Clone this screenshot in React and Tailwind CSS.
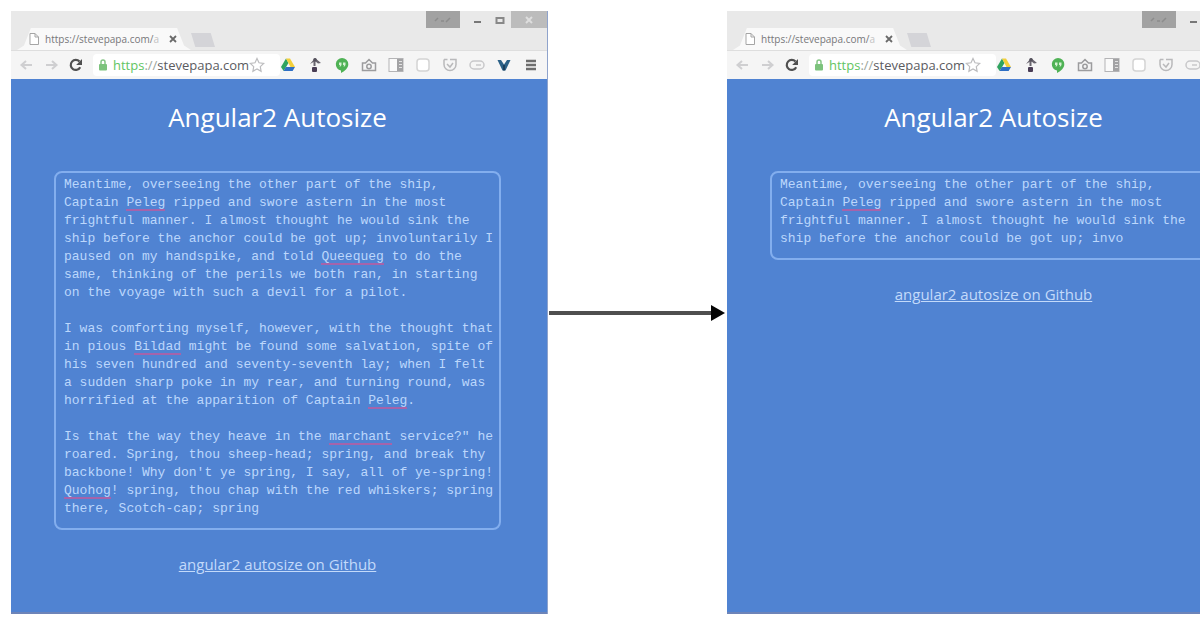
import React from "react";

const FULL_TEXT = `Meantime, overseeing the other part of the ship, Captain Peleg ripped and swore astern in the most frightful manner. I almost thought he would sink the ship before the anchor could be got up; involuntarily I paused on my handspike, and told Queequeg to do the same, thinking of the perils we both ran, in starting on the voyage with such a devil for a pilot.

I was comforting myself, however, with the thought that in pious Bildad might be found some salvation, spite of his seven hundred and seventy-seventh lay; when I felt a sudden sharp poke in my rear, and turning round, was horrified at the apparition of Captain Peleg.

Is that the way they heave in the marchant service?" he roared. Spring, thou sheep-head; spring, and break thy backbone! Why don't ye spring, I say, all of ye-spring! Quohog! spring, thou chap with the red whiskers; spring there, Scotch-cap; spring`;

const SHORT_TEXT = FULL_TEXT.slice(0, FULL_TEXT.indexOf("luntarily"));

// row, column and length of each misspelled word
const FULL_MARKS = [
  [1, 8, 5],
  [4, 33, 8],
  [9, 9, 6],
  [12, 39, 5],
  [14, 34, 8],
  [17, 0, 6],
];
const SHORT_MARKS = FULL_MARKS.slice(0, 1);

function Arrow({ flip }) {
  return (
    <svg viewBox="0 0 14 12" className={flip ? "h-3 w-3.5 -scale-x-100" : "h-3 w-3.5"} fill="none" stroke="#cfcfd1" strokeWidth="2">
      <path d="M13 6H3M7 2 2.5 6 7 10" />
    </svg>
  );
}

function Reload() {
  return (
    <svg viewBox="0 0 14 14" className="size-3.5" fill="none">
      <path d="M11.2 9.2A5 5 0 1 1 10.5 3.6" stroke="#505050" strokeWidth="2.2" />
      <path d="M13 1v6H7.2z" fill="#505050" />
    </svg>
  );
}

const EXTENSIONS = [
  ["Drive", (
    <>
      <path d="M6 1.5 1 10l2.6 4L8.5 6z" fill="#2fa35f" />
      <path d="M6 1.5h4L15 10h-4.5z" fill="#f3cf3a" />
      <path d="M5.8 10H15l-2.4 4H3.6z" fill="#2f6fc4" />
    </>
  )],
  ["Share", (
    <>
      <path d="M8 1 14 6l-3 .5L8.5 4.5V9h-2V5L3 7z" fill="#69656f" />
      <circle cx="8" cy="2.8" r="1.8" fill="#55515c" />
      <rect x="5" y="10" width="5" height="5" rx="1" fill="#4a3d55" />
    </>
  )],
  ["Hangouts", (
    <>
      <path d="M8 1a6.3 6.3 0 0 0-1 12.5V16c3.500-1.500 7.300-4.800 7.300-8.700A6.300 6.300 0 0 0 8 1z" fill="#4fb255" />
      <path d="M5 5.500h2.500v2.500L6.500 9.500H5.500L6 8H5zM9 5.500h2.500v2.500l-1 1.500h-1L10 8H9z" fill="#d6f2d4" />
    </>
  )],
  ["Camera", (
    <g fill="none" stroke="#9c9c9e" strokeWidth="1.5">
      <path d="M1.500 6h3L8 2.500 11.500 6h3v7.500h-13z" />
      <circle cx="8" cy="9.500" r="2.200" />
    </g>
  )],
  ["Sidebar", (
    <>
      <rect x="1" y="1.500" width="14" height="13" fill="#fafafa" stroke="#b4b4b6" />
      <path d="M9 2h6v12H9z" fill="#a3a3a5" />
      <path d="M11 4.500h3M11 7.500h3M11 10.500h3" stroke="#e3e3e3" />
    </>
  )],
  ["Page", <rect x="2" y="2" width="12" height="12" rx="3" fill="#ffffff" stroke="#d4d4d4" strokeWidth="1.500" />],
  ["Pocket", (
    <g fill="none" stroke="#b9b9bb" strokeWidth="1.500">
      <path d="M2 2.500h3.500M8 2.500h6v5a6 6 0 0 1-12 0v-5" />
      <path d="M5 7l3 3 3-4" />
    </g>
  )],
  ["Preview", (
    <g fill="none" stroke="#c8c8ca" strokeWidth="1.500">
      <rect x="1" y="4" width="14" height="8" rx="4" />
      <path d="M7 8h5" />
    </g>
  )],
  ["Vimium", (
    <>
      <path d="M1.500 3 5 3l3 4.500L11 3h3.500L9.500 13.500h-3z" fill="#2c6187" />
      <path d="M8 8v5.500" stroke="#15354f" strokeWidth="1.500" />
    </>
  )],
  ["Menu", <path d="M3 4h10M3 8h10M3 12h10" stroke="#6d6d6d" strokeWidth="2.500" />],
];

function TitleBar() {
  return (
    <div className="flex h-[39px] justify-between bg-[#e9e9e9]">
      <div className="flex items-end pl-1.5">
        <div className="flex h-[22px] w-[174px] items-center bg-[#f9f9f9] pl-3 pr-3.5 [clip-path:polygon(0_100%,4%_80%,8%_0,92%_0,96%_80%,100%_100%)]">
          <svg viewBox="0 0 10 12" className="h-3 w-2.5 shrink-0" fill="#fff" stroke="#a5a5a5">
            <path d="M1 .5h5L9.500 4v7.500H1zM6 .5V4h3.500" />
          </svg>
          <span className="ml-1.5 flex-1 whitespace-nowrap text-[10px] leading-4 text-[#77777a]">
            https://stevepapa.com/<span className="text-[#c4c4c4]">a</span>
          </span>
          <button aria-label="Close tab" className="shrink-0">
            <svg viewBox="0 0 8 8" className="size-2" stroke="#6a6a6a" strokeWidth="1.800">
              <path d="M1 1l6 6M7 1 1 7" />
            </svg>
          </button>
        </div>
        <button aria-label="New tab" className="mb-[3px] h-3.5 w-6 bg-[#d4d4d8] [clip-path:polygon(0_0,82%_0,100%_100%,18%_100%)]" />
      </div>
      <div className="flex h-[17px]">
        <button aria-label="Profile" className="flex w-[34px] items-center justify-center bg-[#a2a2a2]">
          <svg viewBox="0 0 18 6" className="h-1.5 w-[18px]" fill="none" stroke="#8c8c8c" strokeWidth="1.500">
            <path d="M1 4l3-3M7 4h3M12 5l4-4" />
          </svg>
        </button>
        <button aria-label="Minimize" className="flex w-[35px] items-center justify-center">
          <svg viewBox="0 0 8 8" className="size-2" stroke="#777" strokeWidth="2">
            <path d="M0 6h7" />
          </svg>
        </button>
        <button aria-label="Maximize" className="flex w-4 items-center justify-start">
          <svg viewBox="0 0 10 8" className="h-2 w-2.5" fill="none" stroke="#888" strokeWidth="2">
            <path d="M1 2h8M1.500 1v6h7V1" />
          </svg>
        </button>
        <button aria-label="Close" className="flex w-9 items-center justify-center bg-[#bcbcbc]">
          <svg viewBox="0 0 8 8" className="size-2" stroke="#dedede" strokeWidth="2">
            <path d="M1 1l6 6M7 1 1 7" />
          </svg>
        </button>
      </div>
    </div>
  );
}

function Toolbar() {
  return (
    <div className="flex h-[29px] items-center border-t border-[#dedede] bg-[#f5f5f5] pl-2 pr-2">
      <button aria-label="Back"><Arrow /></button>
      <button aria-label="Forward" className="ml-3"><Arrow flip /></button>
      <button aria-label="Reload" className="ml-2.5"><Reload /></button>
      <div className="ml-2.5 flex h-[22px] flex-1 items-center rounded-sm bg-white pl-1.5">
        <svg viewBox="0 0 8 12" className="h-3 w-2 shrink-0">
          <path d="M2 6V3a2 2 0 0 1 4 0v3" fill="none" stroke="#86c686" strokeWidth="1.500" />
          <rect y="5" width="8" height="6.500" rx="1" fill="#7dc37d" />
        </svg>
        <a href="https://stevepapa.com/" className="ml-1.5 whitespace-nowrap text-[13px] leading-5 text-[#5b5b5f]">
          <span className="text-[#62c562]">https</span>
          <span className="text-[#9ba59b]">://</span>stevepapa.com
        </a>
        <button aria-label="Bookmark" className="shrink-0">
          <svg viewBox="0 0 16 16" className="size-4" fill="#fff" stroke="#bcbcbe" strokeWidth="1.200">
            <path d="m8 1.500 2 4.300 4.700.6-3.400 3.200.8 4.700L8 12l-4.100 2.300.8-4.700L1.300 6.400 6 5.800z" />
          </svg>
        </button>
      </div>
      <div className="flex gap-[11px]">
        {EXTENSIONS.map(([name, art]) => (
          <button key={name} aria-label={name}>
            <svg viewBox="0 0 16 16" className="size-4">{art}</svg>
          </button>
        ))}
      </div>
    </div>
  );
}

function AutosizeBox({ id, text, marks }) {
  return (
    <div className="relative font-['Liberation_Mono',monospace] text-[13px] leading-[18px]">
      <label htmlFor={id} className="sr-only">Text</label>
      <textarea
        id={id}
        defaultValue={text}
        spellCheck={false}
        className="block w-full resize-none rounded-lg border-2 border-[#83aeee] bg-transparent pb-2.5 pl-2 pr-0 pt-[3px] text-[#bcd7fc] outline-none [field-sizing:content]"
      />
      <div aria-hidden="true" className="pointer-events-none absolute left-2.5 top-[5px]">
        {marks.map(([row, col, len]) => (
          <div
            key={row}
            className="absolute h-[2px] bg-[#a663aa]"
            style={{ top: row * 18 + 15, left: `${col}ch`, width: `${len}ch` }}
          />
        ))}
      </div>
    </div>
  );
}

function BrowserWindow({ id, text, marks }) {
  return (
    <section className="flex w-[537px] shrink-0 flex-col border-r border-[#8fa3cc]">
      <TitleBar />
      <Toolbar />
      <main className="flex flex-1 flex-col border-b-2 border-[#6d84b8] bg-[#5083d2] pb-9 pl-[43px] pr-[46px] pt-5">
        <h1 className="text-center text-[26px] leading-9 text-white">Angular2 Autosize</h1>
        <div className="mt-9">
          <AutosizeBox id={id} text={text} marks={marks} />
        </div>
        <a href="https://github.com/" className="mt-[22px] self-center text-[15px] leading-6 text-[#c3dafa] underline">
          angular2 autosize on Github
        </a>
      </main>
    </section>
  );
}

export default function App() {
  return (
    <div className="flex min-h-screen items-start overflow-hidden bg-white py-[11px] pl-[11px] font-['Open_Sans',sans-serif]">
      <div className="flex items-stretch">
        <BrowserWindow id="full-text" text={FULL_TEXT} marks={FULL_MARKS} />
        <div className="flex w-[179px] shrink-0 items-center justify-center">
          <svg viewBox="0 0 178 16" className="h-4 w-[178px]">
            <path d="M0 8h164" stroke="#4f4f4f" strokeWidth="4" />
            <path d="M162 0v16l14-8z" fill="#050505" />
          </svg>
        </div>
        <BrowserWindow id="short-text" text={SHORT_TEXT} marks={SHORT_MARKS} />
      </div>
    </div>
  );
}
